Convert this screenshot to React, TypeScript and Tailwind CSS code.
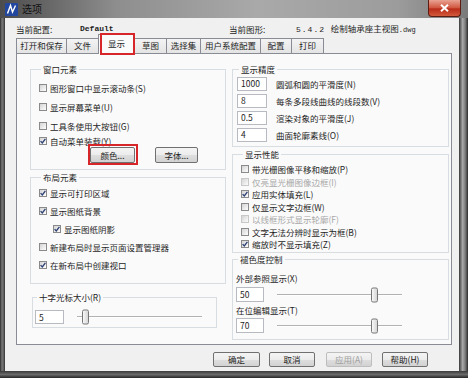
import React from "react";

const cjk = "font-['Noto_Sans_CJK_SC','Noto_Sans',sans-serif]";

function Check({ checked = false, disabled = false }: { checked?: boolean; disabled?: boolean }) {
  return (
    <span
      className={`flex h-[8px] w-[8px] shrink-0 items-center justify-center border bg-[linear-gradient(135deg,#d4d4d4,#fdfdfd)] ${
        disabled ? "border-[#c8c8c8]" : "border-[#8a8a8a]"
      }`}
    >
      {checked && (
        <svg width="6" height="6" viewBox="0 0 6 6">
          <path d="M0.6 3.1 L2.3 4.9 L5.4 0.8" fill="none" stroke="#2c3f73" strokeWidth="1.3" />
        </svg>
      )}
    </span>
  );
}

function CheckRow({
  label,
  checked,
  disabled,
  className = "",
}: {
  label: string;
  checked?: boolean;
  disabled?: boolean;
  className?: string;
}) {
  return (
    <div className={`flex items-center ${className}`}>
      <Check checked={checked} disabled={disabled} />
      <span className={`ml-[3px] whitespace-nowrap ${disabled ? "text-[#a8a8a8]" : ""}`}>{label}</span>
    </div>
  );
}

function Group({ title, className = "", children }: { title: string; className?: string; children: React.ReactNode }) {
  return (
    <fieldset className={`border border-[#d8dde2] ${className}`}>
      <legend className="ml-[2px] px-[2px] text-[8.5px] leading-[10px]">{title}</legend>
      {children}
    </fieldset>
  );
}

function Btn({ children, className = "", disabled }: { children: React.ReactNode; className?: string; disabled?: boolean }) {
  return (
    <div
      className={`flex items-center justify-center rounded-[2px] border bg-[linear-gradient(180deg,#f4f4f4_0%,#ececec_50%,#dedede_51%,#d2d2d2_100%)] text-[8.5px] leading-none ${
        disabled ? "border-[#bdbdbd] text-[#a0a0a0]" : "border-[#707070] text-[#1e1e1e]"
      } ${className}`}
    >
      {children}
    </div>
  );
}

function Field({ value, className = "" }: { value: string; className?: string }) {
  return (
    <div className={`flex items-center border border-[#b7bac1] bg-white pl-[3px] text-[8.5px] leading-none ${className}`}>
      {value}
    </div>
  );
}

function Slider({ thumb }: { thumb: number }) {
  return (
    <div className="relative ml-[13px] h-full w-[125px]">
      <div className="absolute left-0 right-0 top-1/2 h-[2px] -translate-y-1/2 border-t border-[#b2b2b2] bg-white" />
      <div
        className="absolute top-1/2 h-[15px] w-[7px] -translate-y-1/2 rounded-[2px] border border-[#767676] bg-[linear-gradient(90deg,#f8f8f8,#d6d6d6)]"
        style={{ left: thumb }}
      />
    </div>
  );
}

const tabs = [
  { label: "打开和保存", w: "w-[51px]" },
  { label: "文件", w: "w-[33px]" },
  { label: "显示", w: "w-[37px]", active: true },
  { label: "草图", w: "w-[33px]" },
  { label: "选择集", w: "w-[35px]" },
  { label: "用户系统配置", w: "w-[61px]" },
  { label: "配置", w: "w-[32px]" },
  { label: "打印", w: "w-[33px]" },
];

export default function App() {
  return (
    <div className={`flex h-[378px] w-[468px] flex-col overflow-hidden bg-[#3a3a3a] text-[#1e1e1e] ${cjk}`}>
      {/* title bar */}
      <div className="flex h-[18px] shrink-0 items-start bg-[linear-gradient(90deg,#4c4c4c,#8e8e8e_25%,#a9a9a9_55%,#9c9c9c_85%,#7a7a7a)]">
        <svg className="ml-[5px] mt-[3px]" width="13" height="13" viewBox="0 0 13 13">
          <rect x="0" y="0" width="13" height="13" rx="1" fill="#23479e" />
          <path d="M2.5 10.5 L5.5 2.5 L7.5 9 L10.5 2.5" fill="none" stroke="#ffffff" strokeWidth="1.4" />
        </svg>
        <span className="ml-[4px] mt-[3px] text-[10px] leading-[12px] text-[#111]">选项</span>
        <div className="ml-auto mr-[7px] flex h-[17px] w-[33px] items-center justify-center rounded-b-[4px] border border-t-0 border-[#5b1c12] bg-[linear-gradient(180deg,#e9a292,#d0553f_50%,#b92b18_55%,#d25a3c)]">
          <svg width="9" height="8" viewBox="0 0 9 8">
            <path d="M1 0.8 L8 7.2 M8 0.8 L1 7.2" stroke="#ffffff" strokeWidth="2" />
          </svg>
        </div>
      </div>

      <div className="flex h-[353px] shrink-0">
        <div className="w-[5px] bg-[linear-gradient(90deg,#2a2a2a,#7a7a7a_40%,#5c5c5c_75%,#303030)]" />

        {/* client */}
        <div className="flex w-[454px] flex-col bg-[#f0f0f0] pl-[11px] pr-[7px]">
          <div className="mt-[6px] flex h-[10px] items-center text-[8.5px] leading-[10px]">
            <span className="w-[64px]">当前配置:</span>
            <span className="w-[149px] font-['Liberation_Mono',monospace] text-[8px] font-bold">Default</span>
            <span className="w-[67px]">当前图形:</span>
            <span className="whitespace-nowrap">
              <span className="font-['Liberation_Mono',monospace] text-[8px] tracking-[1px]">5.4.2 </span>
              绘制轴承座主视图
              <span className="font-['Liberation_Mono',monospace] text-[7px]">.dwg</span>
            </span>
          </div>

          {/* tabs */}
          <div className="flex h-[19px] items-end">
            {tabs.map((t, i) =>
              t.active ? (
                <div
                  key={t.label}
                  className={`relative z-10 -mb-px -ml-px flex h-[20px] items-center justify-center border border-b-0 border-[#898c95] bg-[#fafafa] pb-[2px] text-[8.5px] ${t.w}`}
                >
                  {t.label}
                  <div className="absolute -bottom-[1px] -right-[1px] -top-[2px] left-[1px] border-2 border-[#d7262a]" />
                </div>
              ) : (
                <div
                  key={t.label}
                  className={`flex h-[15px] items-center justify-center border border-b-0 border-[#898c95] bg-[linear-gradient(180deg,#f3f3f3,#e4e4e4)] pb-[1px] text-[8.5px] ${
                    i === 0 ? "" : "-ml-px"
                  } ${t.w}`}
                >
                  {t.label}
                </div>
              )
            )}
          </div>

          {/* panel */}
          <div className="flex h-[292px] border border-[#898c95] bg-[#fafafa] text-[8.5px] leading-[10px]">
            {/* left column */}
            <div className="ml-[13px] flex w-[196px] flex-col pt-[10px]">
              <Group title="窗口元素" className="pb-[6px] pl-[8px]">
                <div className="pt-[4px]">
                  <CheckRow className="h-[19px]" label="图形窗口中显示滚动条(S)" />
                  <CheckRow className="h-[19px]" label="显示屏幕菜单(U)" />
                  <CheckRow className="h-[19px]" label="工具条使用大按钮(G)" />
                  <CheckRow className="h-[12px]" label="自动菜单装载(Y)" checked />
                  <div className="flex h-[16px]">
                    <div className="relative ml-[51px]">
                      <Btn className="h-[16px] w-[45px]">颜色...</Btn>
                      <div className="absolute -bottom-[2px] -left-[2px] -right-[3px] -top-[3px] border-2 border-[#d7262a]" />
                    </div>
                    <Btn className="ml-[20px] h-[16px] w-[43px]">字体...</Btn>
                  </div>
                </div>
              </Group>

              <Group title="布局元素" className="mt-[2px] pb-[9px] pl-[8px]">
                <div className="pt-[2px]">
                  <CheckRow className="h-[18px]" label="显示可打印区域" checked />
                  <CheckRow className="h-[18px]" label="显示图纸背景" checked />
                  <CheckRow className="h-[18px] pl-[14px]" label="显示图纸阴影" checked />
                  <CheckRow className="h-[18px]" label="新建布局时显示页面设置管理器" />
                  <CheckRow className="h-[18px]" label="在新布局中创建视口" checked />
                </div>
              </Group>

              <Group title="十字光标大小(R)" className="ml-[2px] mt-[8px] w-[185px] pb-[3px] pl-[2px]">
                <div className="flex h-[14px] items-center pt-0" style={{ marginTop: 8 }}>
                  <Field value="5" className="h-[14px] w-[29px]" />
                  <Slider thumb={5} />
                </div>
              </Group>
            </div>

            {/* right column */}
            <div className="ml-[6px] flex w-[217px] flex-col pt-[10px]">
              <Group title="显示精度" className="pb-[3px] pl-[4px]">
                <div className="pt-[1px]">
                  {[
                    ["1000", "圆弧和圆的平滑度(N)"],
                    ["8", "每条多段线曲线的线段数(V)"],
                    ["0.5", "渲染对象的平滑度(J)"],
                    ["4", "曲面轮廓素线(O)"],
                  ].map(([v, l]) => (
                    <div key={l} className="flex h-[17px] items-center">
                      <Field value={v} className="h-[14px] w-[30px]" />
                      <span className="ml-[9px] whitespace-nowrap">{l}</span>
                    </div>
                  ))}
                </div>
              </Group>

              <Group title="显示性能" className="mt-[2px] pb-[1px] pl-[8px]">
                <div className="pt-[4px]">
                  <CheckRow className="h-[12.5px]" label="带光栅图像平移和缩放(P)" />
                  <CheckRow className="h-[12.5px]" label="仅亮显光栅图像边框(I)" disabled />
                  <CheckRow className="h-[12.5px]" label="应用实体填充(L)" checked />
                  <CheckRow className="h-[12.5px]" label="仅显示文字边框(W)" />
                  <CheckRow className="h-[12.5px]" label="以线框形式显示轮廓(F)" disabled />
                  <CheckRow className="h-[12.5px]" label="文字无法分辨时显示为框(B)" />
                  <CheckRow className="h-[12.5px]" label="缩放时不显示填充(Z)" checked />
                </div>
              </Group>

              <Group title="褪色度控制" className="mt-[1.5px] pb-[6px] pl-[3px]">
                <div className="pt-[8px]">
                  <div className="flex h-[12px] items-center">外部参照显示(X)</div>
                  <div className="mt-[3px] flex h-[15px] items-center">
                    <Field value="50" className="h-[15px] w-[28px]" />
                    <Slider thumb={94} />
                  </div>
                  <div className="mt-[2px] flex h-[12px] items-center">在位编辑显示(T)</div>
                  <div className="mt-[2px] flex h-[15px] items-center">
                    <Field value="70" className="h-[15px] w-[28px]" />
                    <Slider thumb={94} />
                  </div>
                </div>
              </Group>
            </div>
          </div>

          {/* buttons */}
          <div className="mt-[7px] flex h-[15px] justify-end pr-[24px]">
            <Btn className="h-[15px] w-[47px] border-[#3c7fb1]">确定</Btn>
            <Btn className="ml-[9px] h-[15px] w-[46px]">取消</Btn>
            <Btn className="ml-[11px] h-[15px] w-[46px]" disabled>
              应用(A)
            </Btn>
            <Btn className="ml-[10px] h-[15px] w-[46px]">帮助(H)</Btn>
          </div>
        </div>

        <div className="w-[9px] bg-[linear-gradient(90deg,#383838,#a8a8a8_40%,#7a7a7a_70%,#2a2a2a)]" />
      </div>

      <div className="h-[7px] shrink-0 bg-[linear-gradient(180deg,#3a3a3a,#6a6a6a_50%,#262626)]" />
    </div>
  );
}
